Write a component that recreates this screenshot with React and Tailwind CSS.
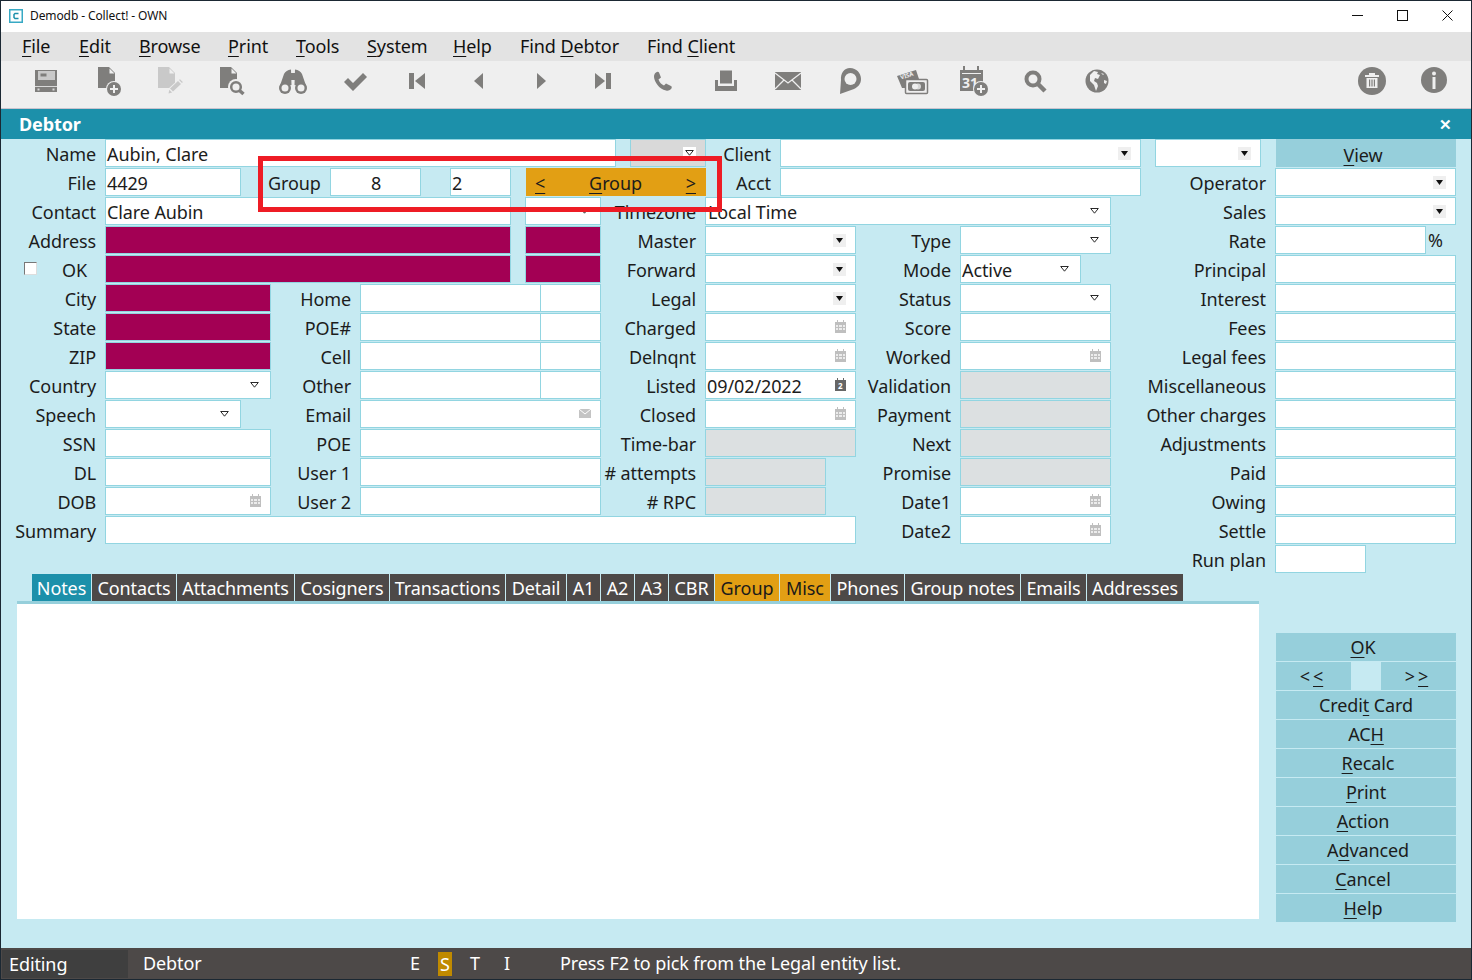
const GREY = '#7f7e7c'
const BG = '#efefef'

/* ── Toolbar icons ───────────────────────────────────────────────────────── */

const Svg = ({ children }) => (
  <svg width="32" height="32" viewBox="0 0 32 32" fill={GREY} className="overflow-visible">{children}</svg>
)

const icons = [
  <Svg key="save">
    <path d="M5 5h22v22H5z" />
    <path d="M8 6h17v9H8z" fill="#c9c9c9" />
    <path d="M10.500 8.500h6v3h-6z" fill={GREY} />
    <path d="M5 21h22v1H5z" fill="#d8d8d8" />
    <path d="M7.500 23.500h2v2h-2zM22.500 23.500h2v2h-2z" fill="#d8d8d8" />
  </Svg>,
  <Svg key="new">
    <path d="M6 2h11l6 6v15H6z" />
    <path d="M17.500 3.500v5h5z" fill={BG} />
    <circle cx="22" cy="24" r="8" fill={BG} />
    <circle cx="22" cy="24" r="7" />
    <path d="M21 20h2v3h3v2h-3v3h-2v-3h-3v-2h3z" fill={BG} />
  </Svg>,
  <Svg key="edit">
    <path d="M4 2h11l6 6v15H4z" fill="#c9c9c9" />
    <path d="M15.500 3.500v5h5z" fill={BG} />
    <path d="M13 30l1-6 11-10 5 5-11 10z" fill={BG} />
    <path d="M14.500 28.500l.8-3.800 2.800 2.800zM16 23.500l8-7.500 3 3-8 7.500zM25 15l1-.8 2.800 2.800-.8 1z" fill="#c9c9c9" />
  </Svg>,
  <Svg key="find">
    <path d="M5 2h11l6 6v15H5z" />
    <path d="M16.500 3.500v5h5z" fill={BG} />
    <circle cx="21" cy="22" r="8" fill={BG} />
    <circle cx="21" cy="22" r="4.800" fill="none" stroke={GREY} strokeWidth="2.500" />
    <path d="M24.500 25.500l4 3.500" stroke={GREY} strokeWidth="3.500" />
  </Svg>,
  <Svg key="binoc">
    <path d="M2.500 22L7 9q2-4 7-4.500l.5 15.500zM29.500 22L25 9q-2-4-7-4.500L17.500 20z" />
    <path d="M14 8h4v7h-4z" />
    <circle cx="8" cy="23" r="6" /><circle cx="24" cy="23" r="6" />
    <circle cx="8" cy="23" r="3.500" fill={BG} /><circle cx="24" cy="23" r="3.500" fill={BG} />
  </Svg>,
  <Svg key="check">
    <path d="M5 17l4-4 5 5L24 8l4 4-14 14z" />
  </Svg>,
  <Svg key="first">
    <path d="M8 8h5v16H8zM24 8v16l-10-8z" />
  </Svg>,
  <Svg key="prev">
    <path d="M20 8v16l-9-8z" />
  </Svg>,
  <Svg key="next">
    <path d="M12 8v16l9-8z" />
  </Svg>,
  <Svg key="last">
    <path d="M8 8v16l10-8zM19 8h5v16h-5z" />
  </Svg>,
  <Svg key="phone">
    <path d="M8 7.500c1-1 2.500-1 3 0l2 5-2.500 2c1 3 3 5 5.500 6l2-2 5 2.500c1 .5 1 2 0 3-1.500 1.500-3 2-5 1.500C11 24 6.500 17 6 12c0-2 .5-3.500 2-4.500z" />
  </Svg>,
  <Svg key="tray">
    <path d="M10 5.500h12v13H10z" />
    <path d="M5 15h3v6h16v-6h3v11H5z" />
  </Svg>,
  <Svg key="mail">
    <path d="M3 7h26v18H3z" />
    <path d="M3 8l13 10L29 8M3 24l9-9M29 24l-9-9" fill="none" stroke={BG} strokeWidth="1.300" />
  </Svg>,
  <Svg key="pin">
    <path d="M16 3c6.500 0 11 5 11 11 0 5-3 8-7 10L6 29l1-14C6.500 8 10 3 16 3z" />
    <circle cx="16.500" cy="14" r="6" fill={BG} />
  </Svg>,
  <Svg key="visa">
    <path d="M1 11l19-6 3 9-14 4v5H6z" />
    <text x="5" y="14.500" fontSize="6" fontWeight="700" fill={BG} transform="rotate(-17 5 14.500)">VISA</text>
    <rect x="9.500" y="14.500" width="22" height="14" rx="1" fill={BG} stroke={GREY} strokeWidth="1.500" />
    <rect x="12" y="17" width="17" height="9" rx="2" />
    <circle cx="19" cy="21.500" r="3" fill={BG} /><circle cx="22" cy="21.500" r="3" fill={BG} opacity="0.8" />
  </Svg>,
  <Svg key="cal">
    <path d="M2 5h3V1h2v4h12V1h2v4h4v21H2z" />
    <path d="M4 8h19v1H4z" fill={BG} />
    <text x="4" y="22.500" fontSize="14" fontWeight="700" fill={BG}>31</text>
    <circle cx="23" cy="24" r="8" fill={BG} />
    <circle cx="23" cy="24" r="7" />
    <path d="M22 20h2v3h3v2h-3v3h-2v-3h-3v-2h3z" fill={BG} />
  </Svg>,
  <Svg key="search">
    <circle cx="14" cy="14" r="6.500" fill="none" stroke={GREY} strokeWidth="4" />
    <path d="M19 19l7 7" stroke={GREY} strokeWidth="4.500" />
  </Svg>,
  <Svg key="globe">
    <circle cx="16" cy="16" r="11.500" />
    <path d="M9 10l4-4 4 1-1 2 3 1-2 4-3-1-1 3 3 2 1 3-2 5-2-6-4-4zM20 8l3 1-1 1zM23 15l3 1-1 3-2-1z" fill={BG} />
  </Svg>,
]

/* ── Form pieces ─────────────────────────────────────────────────────────── */

const BOX = 'h-[28px] shrink-0 border border-[#92d5e1] bg-white flex items-center relative'

function Label({ className = 'w-[104px]', children }) {
  return <div className={`h-[28px] shrink-0 pr-[9px] text-right leading-[30px] whitespace-nowrap ${className}`}>{children}</div>
}

function Field({ className = '', children }) {
  return <div className={`${BOX} pl-[1px] pt-[2px] ${className}`}>{children}</div>
}

function Blocked({ className = '' }) {
  return <div className={`h-[28px] shrink-0 border border-[#92d5e1] bg-[#a30054] ${className}`} />
}

function Off({ className = '' }) {
  return <div className={`h-[28px] shrink-0 border border-[#92d5e1] bg-[#dce0e1] ${className}`} />
}

const OpenArrow = () => (
  <svg width="9" height="6" viewBox="0 0 9 6"><path d="M.7.500h7.600L4.500 5.200z" fill="#fff" stroke="#111" strokeWidth="0.900" /></svg>
)

function Select({ className = '', open = false, value }) {
  return (
    <div className={`${BOX} pl-[1px] ${className}`}>
      {value && <span className="translate-y-[1px]">{value}</span>}
      <span className={`ml-auto mr-[9px] w-[13px] h-[13px] flex items-center justify-center ${open ? '' : 'bg-[#efefef]'}`}>
        {open
          ? <OpenArrow />
          : <svg width="7" height="5" viewBox="0 0 7 5"><path d="M0 0h7L3.500 5z" fill="#111" /></svg>}
      </span>
    </div>
  )
}

function DateField({ className = 'w-[151px]', value, dark = false }) {
  return (
    <div className={`${BOX} pl-[1px] ${className}`}>
      {value && <span className="translate-y-[1px]">{value}</span>}
      <svg className="ml-auto mr-[9px] mb-[1px]" width="11" height="13" viewBox="0 0 11 13" fill={dark ? '#666' : '#bfbfbf'}>
        <path d="M0 2h2V0h1v2h5V0h1v2h2v11H0z" />
        {dark
          ? <text x="3" y="11" fontSize="8" fontWeight="700" fill="#fff">2</text>
          : <path d="M1 5h2v2H1zM4 5h3v2H4zM8 5h2v2H8zM1 8h2v2H1zM4 8h3v2H4zM8 8h2v2H8z" fill="#ececec" />}
      </svg>
    </div>
  )
}

const Row = ({ children }) => <div className="flex h-[29px]">{children}</div>

const U = ({ children }) => <span className="underline underline-offset-[3px]">{children}</span>

/* ── Bottom part ─────────────────────────────────────────────────────────── */

const TABS = [
  { label: 'Notes', w: 'w-[60px]', bg: 'bg-[#1c90aa]' },
  { label: 'Contacts', w: 'w-[85px]' },
  { label: 'Attachments', w: 'w-[118px]' },
  { label: 'Cosigners', w: 'w-[95px]' },
  { label: 'Transactions', w: 'w-[116px]' },
  { label: 'Detail', w: 'w-[61px]' },
  { label: 'A1', w: 'w-[34px]' },
  { label: 'A2', w: 'w-[34px]' },
  { label: 'A3', w: 'w-[34px]' },
  { label: 'CBR', w: 'w-[46px]' },
  { label: 'Group', w: 'w-[65px]', bg: 'bg-[#e29f14]', text: 'text-[#1a1a1a]' },
  { label: 'Misc', w: 'w-[51px]', bg: 'bg-[#e29f14]', text: 'text-[#1a1a1a]' },
  { label: 'Phones', w: 'w-[74px]' },
  { label: 'Group notes', w: 'w-[116px]' },
  { label: 'Emails', w: 'w-[66px]' },
  { label: 'Addresses', w: 'w-[97px]' },
]

const SideButton = ({ className = '', children }) => (
  <button className={`h-[28px] leading-[28px] shrink-0 bg-[#96cfdb] text-center ${className}`}>{children}</button>
)

export default function App() {
  return (
    <div className="relative w-[1472px] h-[980px] overflow-hidden bg-[#1b2833] py-[1px] px-[1px] flex flex-col font-['Noto_Sans','Open_Sans',sans-serif] text-[18px] tracking-[-0.1px] text-[#1c1c1c]">

      {/* ── Title bar ── */}
      <div className="h-[31px] shrink-0 bg-white flex items-center pl-[8px] pb-[2px]">
        <svg width="14" height="14" viewBox="0 0 14 14">
          <rect x="0.750" y="0.750" width="12.500" height="12.500" fill="#fff" stroke="#37a9c4" strokeWidth="1.500" />
          <path d="M9.500 4.500h-3.500l-1 1v3l1 1h3.500" fill="none" stroke="#1c90aa" strokeWidth="1.500" />
        </svg>
        <span className="ml-[7px] text-[12px] tracking-[-0.1px] text-[#111]">Demodb - Collect! - OWN</span>
        <div className="ml-auto flex">
          <div className="w-[45px] h-[29px] flex items-center justify-center">
            <svg width="11" height="11" viewBox="0 0 11 11"><path d="M0 5.500h11" stroke="#111" /></svg>
          </div>
          <div className="w-[45px] h-[29px] flex items-center justify-center">
            <svg width="11" height="11" viewBox="0 0 11 11"><rect x="0.500" y="0.500" width="10" height="10" fill="none" stroke="#111" /></svg>
          </div>
          <div className="w-[45px] h-[29px] flex items-center justify-center mr-[1px]">
            <svg width="11" height="11" viewBox="0 0 11 11"><path d="M.5.500l10 10M10.500.500l-10 10" stroke="#111" /></svg>
          </div>
        </div>
      </div>

      {/* ── Menu ── */}
      <div className="h-[29px] shrink-0 bg-[#e3e3e3] flex items-center pl-[21px] text-[#111] whitespace-nowrap">
        <span className="w-[57px]"><U>F</U>ile</span>
        <span className="w-[60px]"><U>E</U>dit</span>
        <span className="w-[89px]"><U>B</U>rowse</span>
        <span className="w-[68px]"><U>P</U>rint</span>
        <span className="w-[71px]"><U>T</U>ools</span>
        <span className="w-[86px]"><U>S</U>ystem</span>
        <span className="w-[67px]"><U>H</U>elp</span>
        <span className="w-[127px]">Find <U>D</U>ebtor</span>
        <span>Find <U>C</U>lient</span>
      </div>

      {/* ── Toolbar ── */}
      <div className="h-[48px] shrink-0 bg-[#efefef] border-b border-[#c9c4cf] flex items-center pl-[14px] pr-[6px] pb-[7px]">
        {icons.map((icon, i) => (
          <div key={i} className="w-[61.850px] flex justify-center">{icon}</div>
        ))}
        <div className="ml-auto flex">
          <div className="w-[62px] flex justify-center">
            <svg width="30" height="30" viewBox="0 0 30 30">
              <circle cx="15" cy="15" r="14" fill={GREY} />
              <path d="M8 9h14v2H8zM12 7h6v2h-6zM9.500 12h11v10h-11z" fill={BG} />
              <path d="M12 13.500h1.200v7H12zM14.400 13.500h1.200v7h-1.200zM16.800 13.500H18v7h-1.200z" fill={GREY} />
            </svg>
          </div>
          <div className="w-[62px] flex justify-center">
            <svg width="28" height="28" viewBox="0 0 28 28">
              <circle cx="14" cy="14" r="13" fill={GREY} />
              <circle cx="14" cy="7.500" r="2" fill={BG} />
              <path d="M12.500 11h3v12h-3z" fill={BG} />
            </svg>
          </div>
        </div>
      </div>

      {/* ── Debtor window ── */}
      <div className="flex-1 min-h-0 flex flex-col bg-[#c6eaf2]">
        <div className="h-[30px] shrink-0 bg-[#1c90aa] flex items-center justify-between pl-[18px] pr-[19px] text-white font-bold">
          <span>Debtor</span>
          <span className="text-[15px] font-bold leading-none">✕</span>
        </div>

        <div className="shrink-0">
          <Row>
            <Label>Name</Label>
            <Field className="w-[511px]">Aubin, Clare</Field>
            <div className="w-[14px] shrink-0" />
            <div className="w-[76px] h-[28px] shrink-0 border border-[#92d5e1] bg-[#d9d9d9] flex items-center justify-end pr-[9px]">
              <span className="w-[13px] h-[13px] bg-white flex items-center justify-center"><OpenArrow /></span>
            </div>
            <Label className="w-[74px]">Client</Label>
            <Select className="w-[361px]" />
            <div className="w-[14px] shrink-0" />
            <Select className="w-[106px]" />
            <SideButton className="ml-[15px] w-[180px] pr-[6px] pt-[2px]"><U>V</U>iew</SideButton>
          </Row>
          <Row>
            <Label>File</Label>
            <Field className="w-[136px]">4429</Field>
            <div className="w-[89px] shrink-0 pl-[27px] leading-[30px]">Group</div>
            <Field className="w-[91px] justify-center">8</Field>
            <div className="w-[29px] shrink-0" />
            <Field className="w-[61px]">2</Field>
            <div className="w-[15px] shrink-0" />
            <div className="w-[180px] h-[28px] shrink-0 bg-[#e29f14] flex items-center justify-between pl-[9px] pr-[10px] pt-[2px]">
              <U>&lt;</U>
              <span><U>G</U>roup</span>
              <U>&gt;</U>
            </div>
            <Label className="w-[74px]">Acct</Label>
            <Field className="w-[361px]" />
            <Label className="w-[134px]">Operator</Label>
            <Select className="w-[181px]" />
          </Row>
          <Row>
            <Label>Contact</Label>
            <Field className="w-[406px]">Clare Aubin</Field>
            <div className="w-[14px] shrink-0" />
            <Select className="w-[76px]" open />
            <Label>Timezone</Label>
            <Select className="w-[406px] pl-[2px]" open value="Local Time" />
            <Label className="w-[164px]">Sales</Label>
            <Select className="w-[181px]" />
          </Row>
          <Row>
            <Label>Address</Label>
            <Blocked className="w-[406px]" />
            <div className="w-[14px] shrink-0" />
            <Blocked className="w-[76px]" />
            <Label>Master</Label>
            <Select className="w-[151px]" />
            <Label>Type</Label>
            <Select className="w-[151px]" open />
            <Label className="w-[164px]">Rate</Label>
            <Field className="w-[151px]" />
            <span className="pl-[2px] leading-[28px]">%</span>
          </Row>
          <Row>
            <div className="w-[104px] shrink-0 h-[28px] flex items-center pl-[23px]">
              <span className="w-[13px] h-[13px] shrink-0 bg-white border border-[#777] border-r-[#ddd] border-b-[#ddd] mb-[2px]" />
              <span className="ml-[25px] translate-y-[1px]">OK</span>
            </div>
            <Blocked className="w-[406px]" />
            <div className="w-[14px] shrink-0" />
            <Blocked className="w-[76px]" />
            <Label>Forward</Label>
            <Select className="w-[151px]" />
            <Label>Mode</Label>
            <Select className="w-[121px]" open value="Active" />
            <Label className="w-[194px]">Principal</Label>
            <Field className="w-[181px]" />
          </Row>
          <Row>
            <Label>City</Label>
            <Blocked className="w-[166px]" />
            <Label className="w-[89px]">Home</Label>
            <Field className="w-[181px]" />
            <Field className="w-[61px] ml-[-1px]" />
            <Label>Legal</Label>
            <Select className="w-[151px]" />
            <Label>Status</Label>
            <Select className="w-[151px]" open />
            <Label className="w-[164px]">Interest</Label>
            <Field className="w-[181px]" />
          </Row>
          <Row>
            <Label>State</Label>
            <Blocked className="w-[166px]" />
            <Label className="w-[89px]">POE#</Label>
            <Field className="w-[181px]" />
            <Field className="w-[61px] ml-[-1px]" />
            <Label>Charged</Label>
            <DateField />
            <Label>Score</Label>
            <Field className="w-[151px]" />
            <Label className="w-[164px]">Fees</Label>
            <Field className="w-[181px]" />
          </Row>
          <Row>
            <Label>ZIP</Label>
            <Blocked className="w-[166px]" />
            <Label className="w-[89px]">Cell</Label>
            <Field className="w-[181px]" />
            <Field className="w-[61px] ml-[-1px]" />
            <Label>Delnqnt</Label>
            <DateField />
            <Label>Worked</Label>
            <DateField />
            <Label className="w-[164px]">Legal fees</Label>
            <Field className="w-[181px]" />
          </Row>
          <Row>
            <Label>Country</Label>
            <Select className="w-[166px]" open />
            <Label className="w-[89px]">Other</Label>
            <Field className="w-[181px]" />
            <Field className="w-[61px] ml-[-1px]" />
            <Label>Listed</Label>
            <DateField value="09/02/2022" dark />
            <Label>Validation</Label>
            <Off className="w-[151px]" />
            <Label className="w-[164px]">Miscellaneous</Label>
            <Field className="w-[181px]" />
          </Row>
          <Row>
            <Label>Speech</Label>
            <Select className="w-[136px]" open />
            <Label className="w-[119px]">Email</Label>
            <div className={`${BOX} w-[241px] justify-end pr-[9px] pb-[2px]`}>
              <svg width="12" height="9" viewBox="0 0 12 9">
                <path d="M0 0h12v9H0z" fill="#c4c4c4" />
                <path d="M0 0l6 5 6-5" fill="none" stroke="#fff" />
              </svg>
            </div>
            <Label>Closed</Label>
            <DateField />
            <Label>Payment</Label>
            <Off className="w-[151px]" />
            <Label className="w-[164px]">Other charges</Label>
            <Field className="w-[181px]" />
          </Row>
          <Row>
            <Label>SSN</Label>
            <Field className="w-[166px]" />
            <Label className="w-[89px]">POE</Label>
            <Field className="w-[241px]" />
            <Label>Time-bar</Label>
            <Off className="w-[151px]" />
            <Label>Next</Label>
            <Off className="w-[151px]" />
            <Label className="w-[164px]">Adjustments</Label>
            <Field className="w-[181px]" />
          </Row>
          <Row>
            <Label>DL</Label>
            <Field className="w-[166px]" />
            <Label className="w-[89px]">User 1</Label>
            <Field className="w-[241px]" />
            <Label># attempts</Label>
            <Off className="w-[121px]" />
            <Label className="w-[134px]">Promise</Label>
            <Off className="w-[151px]" />
            <Label className="w-[164px]">Paid</Label>
            <Field className="w-[181px]" />
          </Row>
          <Row>
            <Label>DOB</Label>
            <DateField className="w-[166px]" />
            <Label className="w-[89px]">User 2</Label>
            <Field className="w-[241px]" />
            <Label># RPC</Label>
            <Off className="w-[121px]" />
            <Label className="w-[134px]">Date1</Label>
            <DateField />
            <Label className="w-[164px]">Owing</Label>
            <Field className="w-[181px]" />
          </Row>
          <Row>
            <Label>Summary</Label>
            <Field className="w-[751px]" />
            <Label>Date2</Label>
            <DateField />
            <Label className="w-[164px]">Settle</Label>
            <Field className="w-[181px]" />
          </Row>
          <Row>
            <Label className="w-[1274px]">Run plan</Label>
            <Field className="w-[91px]" />
          </Row>
        </div>

        {/* ── Tabs + notes + buttons ── */}
        <div className="flex">
          <div className="ml-[16px] w-[1242px] shrink-0">
            <div className="flex h-[27px] pl-[15px]">
              {TABS.map(t => (
                <div
                  key={t.label}
                  className={`${t.w} shrink-0 border-r border-[#c6eaf2] text-center leading-[29px] whitespace-nowrap ${t.bg || 'bg-[#4d4948]'} ${t.text || 'text-white'}`}
                >
                  {t.label}
                </div>
              ))}
            </div>
            <div className="h-[3px] bg-[#96cfdb]" />
            <div className="h-[315px] bg-white" />
          </div>
          <div className="ml-[17px] w-[180px] shrink-0 pt-[59px] flex flex-col gap-[1px]">
            <SideButton className="pr-[6px]"><U>O</U>K</SideButton>
            <div className="flex justify-between">
              <SideButton className="w-[75px] pr-[4px]">&lt;<span className="ml-[3px]"><U>&lt;</U></span></SideButton>
              <SideButton className="w-[75px] pr-[4px]">&gt;<span className="ml-[3px]"><U>&gt;</U></span></SideButton>
            </div>
            <SideButton>Credi<U>t</U> Card</SideButton>
            <SideButton>AC<U>H</U></SideButton>
            <SideButton className="pl-[4px]"><U>R</U>ecalc</SideButton>
            <SideButton><U>P</U>rint</SideButton>
            <SideButton className="pr-[6px]"><U>A</U>ction</SideButton>
            <SideButton className="pl-[4px]">A<U>d</U>vanced</SideButton>
            <SideButton className="pr-[6px]"><U>C</U>ancel</SideButton>
            <SideButton className="pr-[6px]"><U>H</U>elp</SideButton>
          </div>
        </div>
      </div>

      {/* ── Status bar ── */}
      <div className="h-[31px] shrink-0 bg-[#4d4948] flex items-center text-white">
        <div className="w-[126px] h-[28px] ml-[1px] shrink-0 bg-[#3f3f3f] pl-[7px] leading-[28px]">Editing</div>
        <span className="w-[282px] pl-[15px]">Debtor</span>
        <span className="w-[28px]">E</span>
        <span className="w-[14px] h-[24px] bg-[#c08a00] text-center leading-[24px]">S</span>
        <span className="w-[35px] pl-[18px]">T</span>
        <span className="w-[73px] pl-[17px]">I</span>
        <span>Press F2 to pick from the Legal entity list.</span>
      </div>

      {/* Red highlight drawn over the form */}
      <div className="absolute left-[258px] top-[156px] w-[464px] h-[56px] border-[5px] border-[#ee1c25] pointer-events-none" />
    </div>
  )
}
